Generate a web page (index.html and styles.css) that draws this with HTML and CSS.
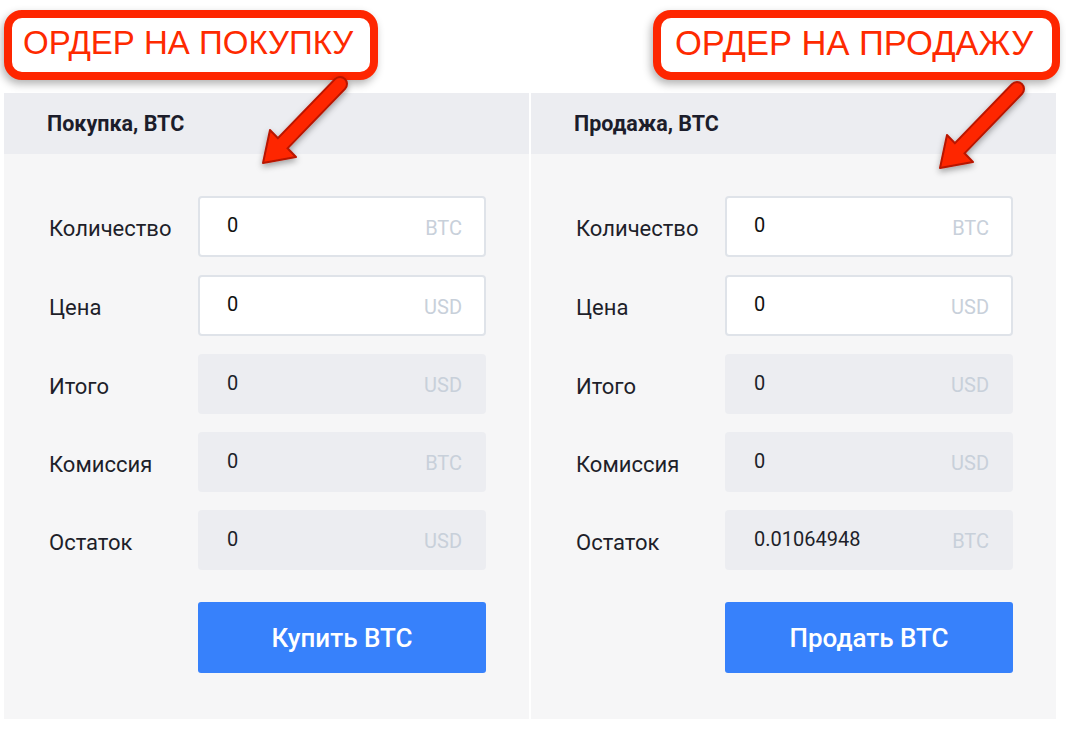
FILE: index.html
```html
<!DOCTYPE html>
<html lang="ru">
<head>
    <meta charset="UTF-8">
    <title>Ордер на покупку / продажу</title>
    <link rel="stylesheet" href="styles.css">
</head>
<body>
    <div class="page">
        <div class="callouts">
            <div class="callout callout-buy">ОРДЕР НА ПОКУПКУ</div>
            <div class="callout callout-sell">ОРДЕР НА ПРОДАЖУ</div>
        </div>

        <div class="panels">
            <div class="panel">
                <div class="panel-header">Покупка, BTC</div>
                <div class="panel-body">
                    <div class="label">Количество</div>
                    <div class="field"><span class="value">0</span><span class="unit">BTC</span></div>

                    <div class="label">Цена</div>
                    <div class="field"><span class="value">0</span><span class="unit">USD</span></div>

                    <div class="label">Итого</div>
                    <div class="field readonly"><span class="value">0</span><span class="unit">USD</span></div>

                    <div class="label">Комиссия</div>
                    <div class="field readonly"><span class="value">0</span><span class="unit">BTC</span></div>

                    <div class="label">Остаток</div>
                    <div class="field readonly"><span class="value">0</span><span class="unit">USD</span></div>

                    <div></div>
                    <button class="action">Купить BTC</button>
                </div>
            </div>

            <div class="panel">
                <div class="panel-header">Продажа, BTC</div>
                <div class="panel-body">
                    <div class="label">Количество</div>
                    <div class="field"><span class="value">0</span><span class="unit">BTC</span></div>

                    <div class="label">Цена</div>
                    <div class="field"><span class="value">0</span><span class="unit">USD</span></div>

                    <div class="label">Итого</div>
                    <div class="field readonly"><span class="value">0</span><span class="unit">USD</span></div>

                    <div class="label">Комиссия</div>
                    <div class="field readonly"><span class="value">0</span><span class="unit">USD</span></div>

                    <div class="label">Остаток</div>
                    <div class="field readonly"><span class="value">0.01064948</span><span class="unit">BTC</span></div>

                    <div></div>
                    <button class="action">Продать BTC</button>
                </div>
            </div>
        </div>

        <!-- annotation arrows drawn over the panels -->
        <svg class="arrow arrow-buy" width="110" height="110" viewBox="0 0 110 110">
            <g filter="url(#shadow)">
                <line x1="90" y1="14" x2="30" y2="76" class="shaft-edge"/>
                <polygon points="13,93 20,60 46,87" class="head"/>
                <line x1="90" y1="14" x2="32" y2="74" class="shaft"/>
            </g>
        </svg>
        <svg class="arrow arrow-sell" width="110" height="110" viewBox="0 0 110 110">
            <g filter="url(#shadow)">
                <line x1="90" y1="14" x2="30" y2="76" class="shaft-edge"/>
                <polygon points="13,93 20,60 46,87" class="head"/>
                <line x1="90" y1="14" x2="32" y2="74" class="shaft"/>
            </g>
        </svg>
        <svg width="0" height="0" class="defs">
            <defs>
                <filter id="shadow" x="-30%" y="-30%" width="160%" height="160%">
                    <feDropShadow dx="0" dy="3" stdDeviation="3" flood-color="#000" flood-opacity="0.35"/>
                </filter>
            </defs>
        </svg>
    </div>
</body>
</html>
```

FILE: styles.css
```css
body {
    margin: 0;
    background-color: #ffffff;
    font-family: Roboto, "Liberation Sans", Arial, sans-serif;
    color: #1e1f2a;
}

.page {
    position: relative;
    width: 1066px;
    height: 746px;
}

.callouts {
    display: flex;
    justify-content: space-between;
    padding: 10px 6px 0 4px;
    height: 93px;
    box-sizing: border-box;
}

.callout {
    height: 70px;
    box-sizing: border-box;
    border: 8px solid #fe2600;
    border-radius: 18px;
    background-color: #ffffff;
    color: #fe2a00;
    font-family: "Liberation Sans", Arial, sans-serif;
    font-size: 33px;
    line-height: 50px;
    padding: 0 0 0 11px;
    box-shadow: -2px 4px 8px rgba(0, 0, 0, 0.3);
    position: relative;
    z-index: 2;
}

.callout-buy {
    width: 374px;
}

.callout-sell {
    width: 407px;
    padding-left: 14px;
    font-size: 34.5px;
}

.panels {
    display: flex;
    gap: 2px;
    padding-left: 4px;
}

.panel {
    width: 525px;
    background-color: #f6f6f7;
}

.panel-header {
    height: 61px;
    background-color: #ecedf1;
    padding-left: 43px;
    font-size: 21.5px;
    font-weight: bold;
    line-height: 61px;
    color: #1c1d2b;
}

.panel-body {
    display: grid;
    grid-template-columns: 149px 288px;
    row-gap: 18px;
    align-items: center;
    padding: 42px 43px 46px 45px;
}

.label {
    font-size: 22px;
    padding-top: 4px;
}

.field {
    height: 61px;
    box-sizing: border-box;
    border: 2px solid #dfe3e9;
    border-radius: 4px;
    background-color: #ffffff;
    display: flex;
    justify-content: space-between;
    align-items: center;
    padding: 0 22px 0 27px;
}

.field.readonly {
    background-color: #ecedf1;
    border-color: #ecedf1;
    height: 60px;
}

.value {
    font-size: 20px;
    color: #111111;
    padding-bottom: 3px;
}

.readonly .value {
    color: #1e1f2a;
}

.unit {
    font-size: 20px;
    color: #c8d0da;
    padding-top: 2px;
}

.action {
    grid-column: 2;
    margin-top: 14px;
    height: 71px;
    border: none;
    border-radius: 3px;
    background-color: #3781fb;
    color: #ffffff;
    font-family: Roboto, "Liberation Sans", Arial, sans-serif;
    font-size: 26px;
    font-weight: 500;
    cursor: pointer;
}

.arrow {
    position: absolute;
    z-index: 3;
}

.arrow-buy {
    left: 250px;
    top: 70px;
}

.arrow-sell {
    left: 927px;
    top: 75px;
}

.arrow .shaft-edge {
    stroke: #b81500;
    stroke-width: 16;
    stroke-linecap: round;
}

.arrow .shaft {
    stroke: #fe2600;
    stroke-width: 12;
    stroke-linecap: round;
}

.arrow .head {
    fill: #fe2600;
    stroke: #b81500;
    stroke-width: 2;
    stroke-linejoin: round;
}

.defs {
    position: absolute;
}
```
